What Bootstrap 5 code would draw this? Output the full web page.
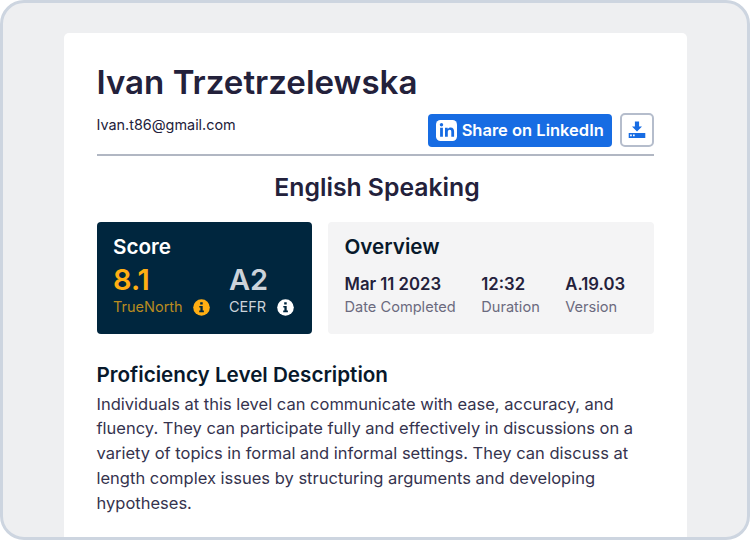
<!DOCTYPE html>
<html lang="en">
<head>
<meta charset="utf-8">
<meta name="viewport" content="width=device-width, initial-scale=1">
<title>English Speaking report</title>
<link href="https://cdn.jsdelivr.net/npm/bootstrap@5.3.0/dist/css/bootstrap.min.css" rel="stylesheet">
<style>
html { font-size: 16.5px; }
body { font-family: Inter, "Liberation Sans", sans-serif; color: #23213b; line-height: 1.5; background: #fff; }
.frame { height: 540px; border: 3px solid #cdd5e0; border-radius: 24px; background: #eeeff1; padding: 30px 60.5px 0 60.5px; }
.sheet { height: 510px; border-radius: 5px 5px 0 0; padding: 0 33px; }
.person { font-size: 33.1px; font-weight: 600; line-height: 40px; padding-top: 29px; }
.contact { height: 54px; border-bottom: 2px solid #b1b7c3; padding-top: 11px; }
.mail { font-size: 14.4px; line-height: 22px; padding-top: 1px; }
.actions { gap: 8px; }
.btn-share { background: #176ce3; color: #fff; font-weight: 600; font-size: 16.5px; height: 33px; width: 184px; border-radius: 4px; padding: 0 8px; margin: .5px 0 0 0; }
.btn-share span { padding-left: .5px; }
.btn-get { width: 33.500px; height: 34px; border: 2px solid #b5bdcc; border-radius: 5px; background: #fff; padding: 0; }
.exam { font-size: 24.75px; font-weight: 600; line-height: 32px; padding: 15px 0 0 4px; }
.panels { gap: 16.5px; margin-top: 19px; }
.panel { height: 111.500px; border-radius: 4px; padding: 12px 16.5px 0; }
.panel-score { width: 215px; background: #00263e; color: #fff; }
.panel-info { background: #f4f4f5; }
.head { font-size: 20.65px; font-weight: 600; line-height: 25px; }
.dark { color: #08192b; }
.score { font-size: 29px; font-weight: 600; line-height: 36px; margin-top: 3px; }
.tag { font-size: 14.5px; line-height: 18px; }
.gold { color: #ffae13; }
.gold-dim { color: #b98b20; }
.pale { color: #ccd3da; }
.scale-main { width: 116px; }
.badge-gap { margin-left: 10.500px; }
.facts { gap: 25.500px; margin-top: 14px; }
.facts .tag { font-size: 14.6px; }
.fact { font-size: 16.7px; font-weight: 600; line-height: 22px; margin-bottom: 3px; }
.muted-tag { color: #6b6a7e; }
.about { padding-top: 28px; }
.copy { font-size: 16.5px; line-height: 24.9px; color: #35334e; margin-top: 5px; }
</style>
<script src="https://cdn.jsdelivr.net/npm/bootstrap@5.3.0/dist/js/bootstrap.bundle.min.js"></script>
</head>
<body>
<div class="frame overflow-hidden">
  <main class="sheet bg-white">
    <h1 class="person mb-0">Ivan Trzetrzelewska</h1>
    <div class="contact d-flex justify-content-between align-items-start">
      <div class="mail">Ivan.t86@gmail.com</div>
      <div class="actions d-flex">
        <button class="btn btn-share border-0 d-flex align-items-center gap-1 text-nowrap">
          <svg width="21" height="21" viewBox="0 0 21 21" class="flex-shrink-0"><rect width="21" height="21" rx="4.5" fill="#fff"/><circle cx="5.5" cy="4.7" r="1.7" fill="#176ce3"/><path d="M4.1 7.7h2.8v9.1H4.1zM9 7.7h2.700v1.3c.6-1 1.6-1.6 3-1.6 2.5 0 3.4 1.6 3.4 4.2v5.2h-2.8V12c0-1.4-.4-2.3-1.6-2.3-1.4 0-1.9 1-1.9 2.4v4.7H9z" fill="#176ce3"/></svg>
          <span>Share on LinkedIn</span>
        </button>
        <button class="btn btn-get d-flex align-items-center justify-content-center" aria-label="Download">
          <svg width="18" height="18" viewBox="0 0 18 18" fill="#176ce3"><path d="M6.900 .4h4.200v5h2.900L9 10.600 4 5.400h2.900z"/><path fill-rule="evenodd" d="M.7 11.900h16.600v5.200H.7zM2.100 13.600v1.700h1.700v-1.700zM5 13.600v1.700h1.700v-1.700z"/></svg>
        </button>
      </div>
    </div>
    <h2 class="exam text-center mb-0">English Speaking</h2>
    <div class="panels d-flex">
      <section class="panel panel-score flex-shrink-0">
        <h3 class="head mb-0">Score</h3>
        <div class="d-flex">
          <div class="scale-main">
            <div class="score gold">8.1</div>
            <div class="tag gold-dim d-flex align-items-center">TrueNorth
              <svg class="badge-gap" width="17" height="17" viewBox="0 0 17 17"><circle cx="8.500" cy="8.500" r="8.300" fill="#ffae13"/><path d="M7.200 3.300h2.500v2.300H7.200zM6.300 6.900h3.400v4.700h1.200v1.600H6.200v-1.600h1.200V8.500H6.300z" fill="#00263e"/></svg>
            </div>
          </div>
          <div>
            <div class="score pale">A2</div>
            <div class="tag pale d-flex align-items-center">CEFR
              <svg class="badge-gap" width="17" height="17" viewBox="0 0 17 17"><circle cx="8.500" cy="8.500" r="8.300" fill="#fff"/><path d="M7.200 3.300h2.500v2.300H7.200zM6.300 6.900h3.400v4.700h1.200v1.600H6.200v-1.600h1.200V8.500H6.300z" fill="#00263e"/></svg>
            </div>
          </div>
        </div>
      </section>
      <section class="panel panel-info flex-grow-1">
        <h3 class="head dark mb-0">Overview</h3>
        <div class="facts d-flex">
          <div><div class="fact">Mar 11 2023</div><div class="tag muted-tag">Date Completed</div></div>
          <div><div class="fact">12:32</div><div class="tag muted-tag">Duration</div></div>
          <div><div class="fact">A.19.03</div><div class="tag muted-tag">Version</div></div>
        </div>
      </section>
    </div>
    <section class="about">
      <h3 class="head dark mb-0">Proficiency Level Description</h3>
      <p class="copy mb-0">Individuals at this level can communicate with ease, accuracy, and fluency. They can participate fully and effectively in discussions on a variety of topics in formal and informal settings. They can discuss at length complex issues by structuring arguments and developing hypotheses.</p>
    </section>
  </main>
</div>
</body>
</html>
